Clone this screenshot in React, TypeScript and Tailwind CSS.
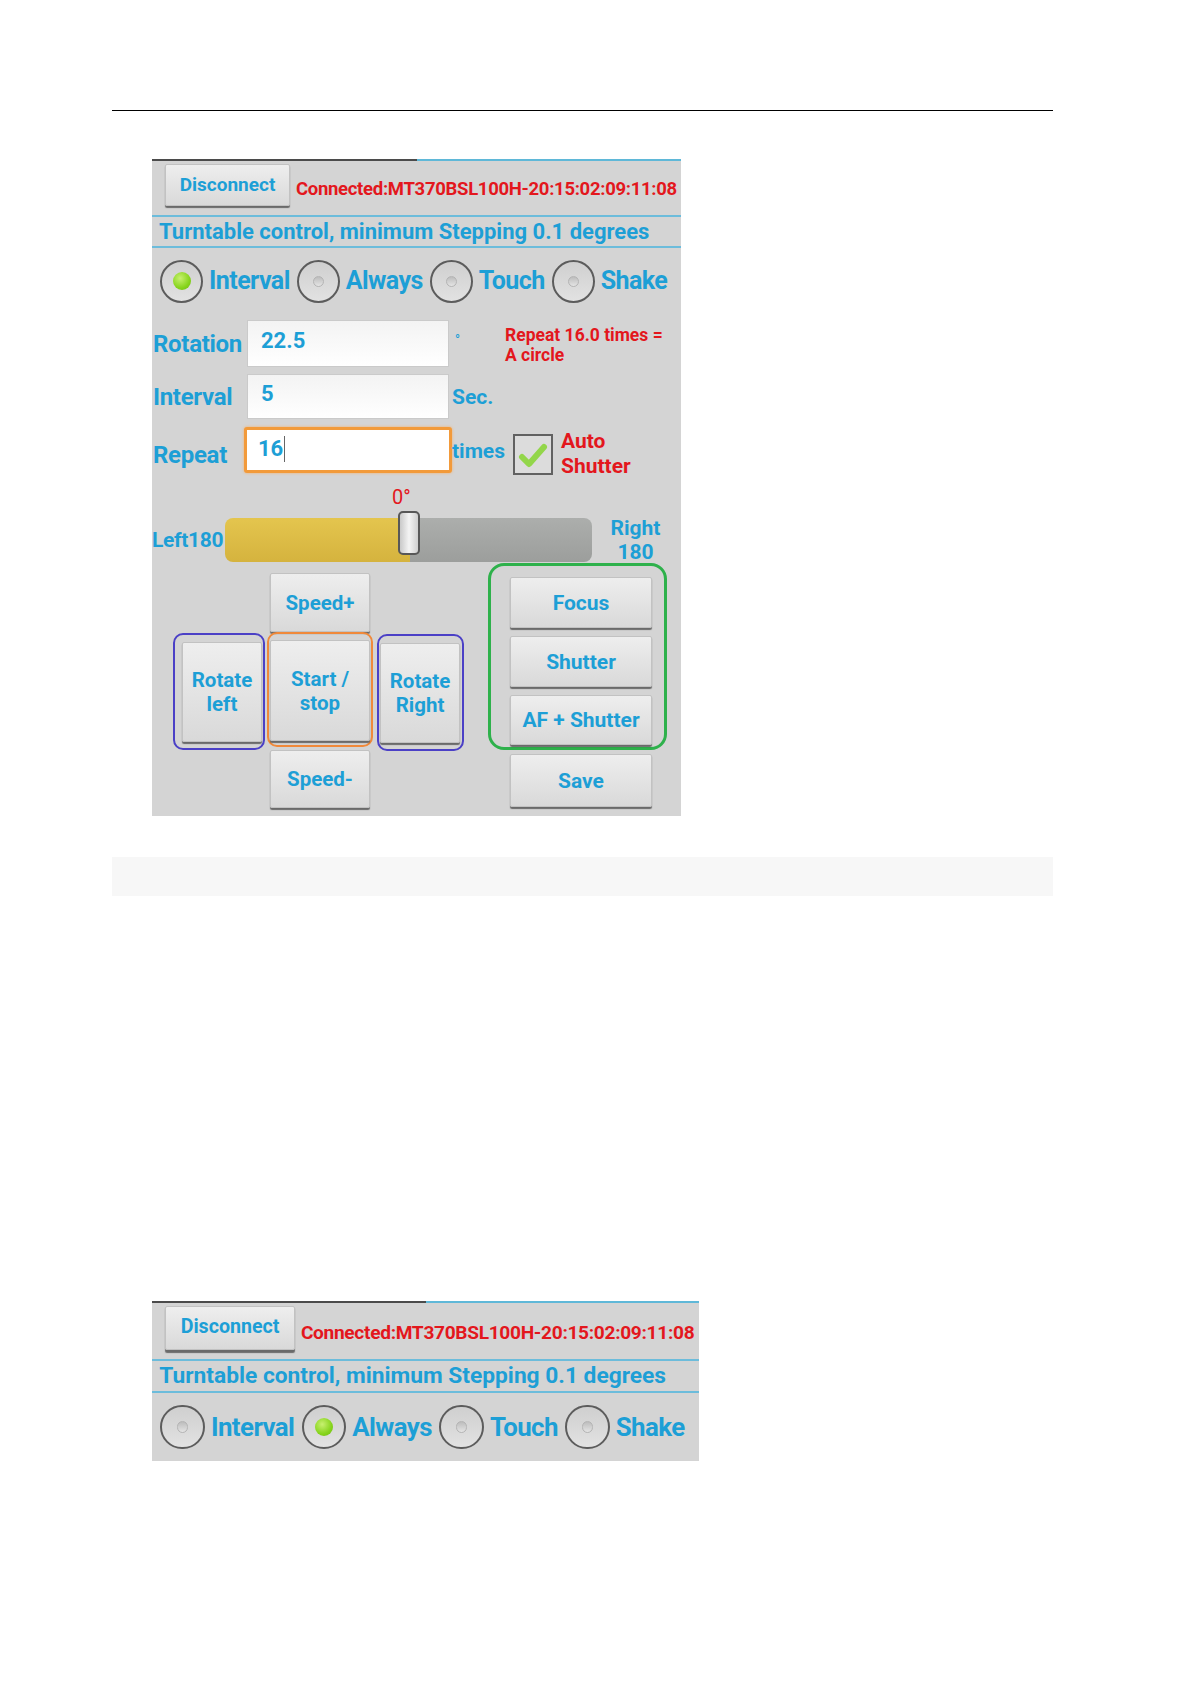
import React from 'react'

const blue = 'text-[#1d9fd6]'
const red = 'text-[#e3171d]'
const btn =
  'flex items-center justify-center bg-linear-to-b from-[#eeeeee] to-[#d9d9d9] border border-[#c2c2c2] rounded-[2px] shadow-[0_2px_1px_rgba(0,0,0,0.5)] font-bold text-[#1d9fd6] leading-[24px] text-center'

function Radio({ checked }: { checked: boolean }) {
  return (
    <div className="w-[43px] h-[43px] shrink-0 rounded-full border-2 border-[#5c5c5c] bg-linear-to-b from-[#cfcfcf] to-[#e2e2e2] flex items-center justify-center">
      {checked ? (
        <div className="w-[18px] h-[18px] rounded-full bg-[radial-gradient(circle_at_40%_35%,#c8f070,#86d41c_60%,#6cb814)]" />
      ) : (
        <div className="w-[11px] h-[11px] rounded-full border border-[#b4b4b4] bg-linear-to-b from-[#bdbdbd] to-[#e4e4e4]" />
      )}
    </div>
  )
}

function Header({ checked }: { checked: number }) {
  const modes = ['Interval', 'Always', 'Touch', 'Shake']
  return (
    <>
      <div className="flex h-[2px]">
        <div className="w-[265px] bg-[#4b4b4b]" />
        <div className="flex-1 bg-[#5fb8d8]" />
      </div>
      <div className="flex items-center h-[54px]">
        <button className={`${btn} self-start ml-[13px] mt-[3px] w-[125px] h-[42px] text-[19px] pb-[1px]`}>
          Disconnect
        </button>
        <span className={`ml-[6px] pt-[4px] font-bold text-[18.5px] tracking-[-0.3px] ${red}`}>
          Connected:MT370BSL100H-20:15:02:09:11:08
        </span>
      </div>
      <div className="h-[2px] bg-[#6cbcdb]" />
      <div className={`h-[29px] flex items-center pl-[7px] font-bold text-[22px] ${blue}`}>
        Turntable control, minimum Stepping 0.1 degrees
      </div>
      <div className="h-[2px] bg-[#6cbcdb]" />
      <div className="h-[66px] flex items-center pl-[8px] gap-[7px]">
        {modes.map((m, i) => (
          <div key={m} className="flex items-center gap-[6px]">
            <Radio checked={i === checked} />
            <span className={`font-bold text-[25px] tracking-[-0.55px] ${blue}`}>{m}</span>
          </div>
        ))}
      </div>
    </>
  )
}

function Field({ value, focused }: { value: string; focused?: boolean }) {
  return (
    <div
      className={
        focused
          ? 'w-[208px] h-[46px] shrink-0 bg-white border-[3px] border-[#f29a3a] rounded-[3px] shadow-[0_0_3px_#f5b06a] flex items-center pl-[11px] pb-[3px]'
          : 'w-[202px] h-full shrink-0 bg-linear-to-b from-[#f3f3f3] to-white border border-[#cacaca] flex items-center pl-[13px] pb-[6px]'
      }
    >
      <span className="font-bold text-[22px] text-[#1d9fd6]">{value}</span>
      {focused && <span className="w-px h-[26px] bg-[#666] ml-[1px]" />}
    </div>
  )
}

function Panel() {
  return (
    <div className="w-[529px] h-[657px] bg-[#d4d4d4]">
      <Header checked={0} />

      <div className="flex h-[47px] mt-[6px]">
        <div className={`w-[95px] flex items-center pl-[1px] font-bold text-[24px] tracking-[-0.3px] ${blue}`}>Rotation</div>
        <Field value="22.5" />
        <div className={`w-[56px] pl-[6px] pt-[10px] text-[13px] font-bold ${blue}`}>°</div>
        <div className={`pt-[5px] font-bold text-[17.5px] leading-[20px] ${red}`}>
          Repeat 16.0 times =<br />A circle
        </div>
      </div>

      <div className="flex h-[45px] mt-[7px]">
        <div className={`w-[95px] flex items-center pl-[1px] font-bold text-[24px] tracking-[-0.3px] ${blue}`}>Interval</div>
        <Field value="5" />
        <div className={`flex items-center pl-[3px] pt-[3px] font-bold text-[21px] ${blue}`}>Sec.</div>
      </div>

      <div className="flex h-[46px] mt-[8px]">
        <div className={`w-[92px] flex items-center pl-[1px] pt-[10px] font-bold text-[24px] tracking-[-0.3px] ${blue}`}>Repeat</div>
        <Field value="16" focused />
        <div className={`w-[61px] flex items-center pt-[4px] font-bold text-[21px] ${blue}`}>times</div>
        <div className="mt-[7px] w-[40px] h-[41px] border-2 border-[#616161] bg-[#dcdcdc] flex items-center justify-center">
          <svg width="30" height="28" viewBox="0 0 30 28">
            <path d="M4 16 L11 23 L26 6" fill="none" stroke="#93d64a" strokeWidth="6" strokeLinecap="round" strokeLinejoin="round" />
          </svg>
        </div>
        <div className={`ml-[8px] pt-[2px] font-bold text-[21px] leading-[25px] ${red}`}>
          Auto
          <br />
          Shutter
        </div>
      </div>

      <div className={`h-[38px] pl-[240px] pt-[12px] text-[20px] leading-[24px] ${red}`}>0°</div>

      <div className="flex h-[51px]">
        <div className={`w-[73px] flex items-center pt-[8px] font-bold text-[21px] tracking-[-0.3px] ${blue}`}>Left180</div>
        <div className="relative w-[367px] h-[44px] mt-[7px] rounded-[8px] flex">
          <div className="w-[185px] h-full rounded-l-[8px] bg-linear-to-b from-[#e4c54e] to-[#d5b33e]" />
          <div className="flex-1 h-full rounded-r-[8px] bg-linear-to-b from-[#acaeac] to-[#9c9e9c]" />
          <div className="absolute left-[173px] top-[-7px] w-[22px] h-[44px] rounded-[5px] border-2 border-[#585858] bg-linear-to-r from-[#c9c9c9] via-[#f4f4f4] to-[#cfcfcf]" />
        </div>
        <div className={`w-[51px] ml-[18px] pt-[5px] text-center font-bold text-[21px] leading-[24px] ${blue}`}>
          Right
          <br />
          180
        </div>
      </div>

      <div className="flex mt-[1px]">
        <div className="flex ml-[21px] mt-[10px]">
          <div className="w-[92px] mt-[60px] h-[117px] border-2 border-[#4b40c6] rounded-[10px] pl-[7px] pr-[1px] pt-[7px]">
            <button className={`${btn} w-[80px] h-[100px] text-[20.5px]`}>
              Rotate
              <br />
              left
            </button>
          </div>
          <div className="w-[106px] ml-[2px] flex flex-col items-center">
            <button className={`${btn} w-[100px] h-[59px] text-[20.5px]`}>Speed+</button>
            <div className="w-[106px] h-[115px] border-2 border-[#f0893a] rounded-[10px] px-[1px] pt-[6px]">
              <button className={`${btn} w-[100px] h-[101px] text-[20.5px]`}>
                Start /
                <br />
                stop
              </button>
            </div>
            <button className={`${btn} mt-[3px] w-[100px] h-[58px] text-[20.5px]`}>Speed-</button>
          </div>
          <div className="w-[87px] ml-[4px] mt-[61px] h-[117px] border-2 border-[#4b40c6] rounded-[10px] pl-[1px] pt-[7px]">
            <button className={`${btn} w-[80px] h-[100px] text-[20.5px]`}>
              Rotate
              <br />
              Right
            </button>
          </div>
        </div>

        <div className="ml-[24px]">
          <div className="w-[179px] h-[187px] border-[3px] border-[#2eb14b] rounded-[16px] pl-[19px] pt-[11px] flex flex-col gap-[8px]">
            <button className={`${btn} w-[142px] h-[51px] text-[21px]`}>Focus</button>
            <button className={`${btn} w-[142px] h-[51px] text-[21px]`}>Shutter</button>
            <button className={`${btn} w-[142px] h-[50px] text-[21px]`}>AF + Shutter</button>
          </div>
          <button className={`${btn} ml-[22px] mt-[4px] w-[142px] h-[53px] text-[21px]`}>Save</button>
        </div>
      </div>
    </div>
  )
}

export default function App() {
  return (
    <div className="w-[1190px] h-[1684px] bg-white font-['Roboto',sans-serif] overflow-hidden">
      <div className="pt-[110px] pl-[112px]">
        <div className="w-[941px] h-px bg-black" />
      </div>
      <div className="ml-[152px] mt-[48px]">
        <Panel />
      </div>
      <div className="ml-[112px] mt-[41px] w-[941px] h-[39px] bg-[#f7f7f7]" />
      <div className="ml-[152px] mt-[405px]">
        <div className="w-[529px] h-[155px] bg-[#d4d4d4] [zoom:1.034] overflow-hidden">
          <Header checked={1} />
        </div>
      </div>
    </div>
  )
}
